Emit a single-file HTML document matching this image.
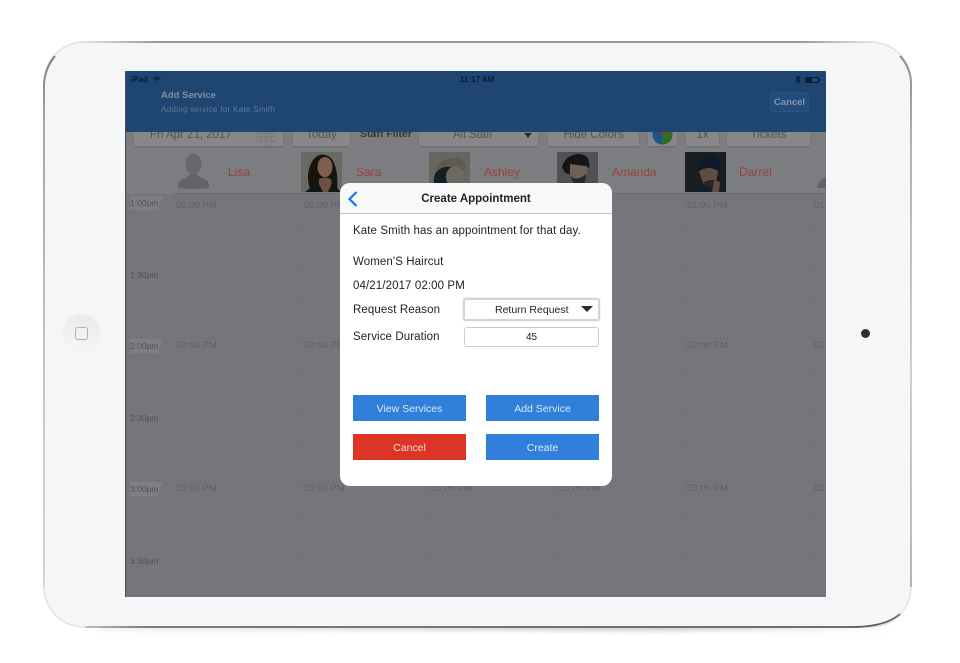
<!DOCTYPE html>
<html><head><meta charset="utf-8">
<style>
html,body{margin:0;padding:0;background:#fff}
#p{position:relative;width:960px;height:663px;overflow:hidden;background:#fff;font-family:"Liberation Sans",sans-serif}
.a{position:absolute}
.t{position:absolute;white-space:nowrap;line-height:1}
.tb{position:absolute;background:#86878a;top:120px;height:26px;box-shadow:0 1px 1px #6a6b6f;color:#535458;font-size:11.5px;text-align:center;line-height:26px}
.tb span{position:absolute;left:0;right:0;top:2px;line-height:26px}
.tl{position:absolute;left:130px;font-size:8.5px;color:#505256;line-height:1;white-space:nowrap}
.tp{position:absolute;font-size:9.5px;color:#5f6165;line-height:1;white-space:nowrap}
.nm{position:absolute;top:166px;font-size:12px;color:#94453a;line-height:1;white-space:nowrap}
.ph{position:absolute;top:152px;width:41px;height:40px;overflow:hidden}
.lb{position:absolute;left:353px;font-size:11.5px;color:#222;line-height:1;white-space:nowrap;letter-spacing:.1px}
.btn{position:absolute;width:113px;height:26px;background:#2f7fdb;color:#dce9f8;font-size:10.5px;text-align:center;line-height:28px}
.lbg{position:absolute;left:130px;width:33px;height:14px;background:#7d7f83;clip-path:polygon(0 0,100% 0,85% 100%,0 100%)}
.hl{position:absolute;left:0;right:0;height:1px;background:#6f7176}
.vl{position:absolute;top:0;bottom:0;width:1px;background:#717378}
</style></head><body><div id="p">

<!-- device -->
<svg class="a" style="left:0;top:0" width="960" height="663" fill="none">
<defs>
<linearGradient id="sh" x1="0" x2="1" y1="0" y2="0"><stop offset="0" stop-color="#bbb" stop-opacity=".2"/><stop offset=".7" stop-color="#aaa" stop-opacity=".6"/><stop offset="1" stop-color="#bbb" stop-opacity="0"/></linearGradient>
<linearGradient id="top" gradientUnits="userSpaceOnUse" x1="78" x2="878" y1="0" y2="0"><stop offset="0" stop-color="#e8e8e8"/><stop offset=".1" stop-color="#8c8c8c"/><stop offset=".9" stop-color="#8c8c8c"/><stop offset="1" stop-color="#e8e8e8"/></linearGradient>
<linearGradient id="lft" gradientUnits="userSpaceOnUse" x1="0" x2="0" y1="56" y2="587"><stop offset="0" stop-color="#7e7e7e"/><stop offset=".12" stop-color="#a5a5a5"/><stop offset=".6" stop-color="#c6c6c6"/><stop offset="1" stop-color="#d4d4d4"/></linearGradient>
<linearGradient id="rgt" gradientUnits="userSpaceOnUse" x1="0" x2="0" y1="56" y2="587"><stop offset="0" stop-color="#8a8a8a"/><stop offset=".15" stop-color="#b0b0b0"/><stop offset=".6" stop-color="#cfcfcf"/><stop offset="1" stop-color="#b5b5b5"/></linearGradient>
<linearGradient id="bot" gradientUnits="userSpaceOnUse" x1="60" x2="900" y1="0" y2="0"><stop offset="0" stop-color="#d8d8d8"/><stop offset=".1" stop-color="#6c6c6c"/><stop offset=".95" stop-color="#5c5c5c"/><stop offset="1" stop-color="#666"/></linearGradient>
</defs>
<rect x="100" y="624" width="800" height="7" fill="url(#sh)" style="filter:blur(2px)"/>
<rect x="44" y="42" width="867" height="585" rx="40" fill="#f4f6f8" stroke="#e2e3e5" stroke-width="1.500"/>
<path d="M78 42H878" stroke="url(#top)" stroke-width="1.800"/>
<path d="M55 56Q45 68 44 84V587" stroke="url(#lft)" stroke-width="2"/>
<path d="M900 56Q911 68 911 84V587" stroke="url(#rgt)" stroke-width="2"/>
<path d="M85 627H852Q885 627 900 614" stroke="url(#bot)" stroke-width="1.800"/>
</svg>
<div class="a" style="left:62px;top:314px;width:39px;height:39px;border-radius:50%;background:linear-gradient(#e9eaec,#f6f7f8)"></div>
<div class="a" style="left:75px;top:327px;width:13px;height:13px;box-sizing:border-box;border:1px solid #aeb0b4;border-radius:3px"></div>
<div class="a" style="left:861px;top:329px;width:9px;height:9px;border-radius:50%;background:#2b2e33"></div>

<!-- screen -->
<div class="a" style="left:126px;top:71px;width:700px;height:526px;background:#74767b"></div>
<div class="a" style="left:125px;top:71px;width:1px;height:526px;background:#4a4c50"></div>
<div class="a" style="left:127px;top:132px;width:698px;height:62px;background:#7c7d81"></div>

<!-- toolbar -->
<div class="tb" style="left:134px;width:149px"><span style="left:16px;right:auto">Fri Apr 21, 2017</span>
<svg class="a" style="left:122px;top:11px" width="20" height="14" stroke="#76777b" fill="none"><path d="M0 2H20M0 6H20M0 10H20M5 0V14M10 0V14M15 0V14"/></svg></div>
<div class="tb" style="left:293px;width:57px"><span>Today</span></div>
<div class="t" style="left:360px;top:129px;font-size:10.500px;font-weight:bold;color:#36373b">Staff Filter</div>
<div class="tb" style="left:419px;width:119px"><span style="left:34px;right:auto">All Staff</span></div>
<div class="a" style="left:524px;top:133px;width:0;height:0;border-left:4px solid transparent;border-right:4px solid transparent;border-top:5px solid #2a2a2a"></div>
<div class="tb" style="left:548px;width:91px"><span>Hide Colors</span></div>
<div class="tb" style="left:648px;width:29px"></div>
<svg class="a" style="left:652px;top:124px" width="21" height="21"><circle cx="10.500" cy="10.500" r="10" fill="#1c5485"/><path d="M10.500 10.500V.5A10 10 0 0 1 20.500 10.500A10 10 0 0 1 10.500 20.500Z" fill="#2f6f25"/><rect x="4" y="8" width="13" height="1" fill="#8a3a32"/></svg>
<div class="tb" style="left:686px;width:33px"><span>1x</span></div>
<div class="tb" style="left:727px;width:83px"><span>Tickets</span></div>

<!-- staff header -->
<svg class="a" style="left:177px;top:153px" width="33" height="36"><ellipse cx="16.500" cy="11" rx="8" ry="10.500" fill="#67686c"/><path d="M1 35Q0 27 9 25L13 21H20L24 25Q33 27 32 35Q16 37 1 35Z" fill="#636468"/></svg>
<div class="nm" style="left:228px">Lisa</div>
<div class="ph" style="left:301px;background:#686b63">
<svg width="41" height="40"><path d="M10 40Q3 22 12 8Q20 -2 30 6Q38 16 36 40Z" fill="#191310"/><ellipse cx="24" cy="15" rx="7.500" ry="10" fill="#7f6050"/><path d="M18 27Q24 24 30 27L32 40H17Z" fill="#6c5142"/><path d="M4 40L17 30 22 40ZM40 40L31 31 27 40Z" fill="#131518"/></svg></div>
<div class="nm" style="left:356px">Sara</div>
<div class="ph" style="left:429px;background:#66665e">
<svg width="41" height="40"><path d="M6 18Q12 5 30 6Q38 10 36 18Z" fill="#5f5950"/><path d="M5 32Q3 18 16 15Q30 14 27 22L22 40H8Z" fill="#161e25"/><ellipse cx="26" cy="25" rx="9" ry="11" fill="#6b6964"/><path d="M21 32L28 31 27 34Z" fill="#6e1c26"/></svg></div>
<div class="nm" style="left:484px">Ashley</div>
<div class="ph" style="left:557px;background:#505154">
<svg width="41" height="40"><path d="M5 15Q8 3 22 2Q34 3 32 16L28 14Q18 13 14 12L13 22Q7 22 5 15Z" fill="#151518"/><path d="M13 12Q24 14 30 14Q31 28 24 32Q16 32 13 22Z" fill="#6f6053"/><path d="M14 24Q20 30 29 22Q29 34 22 35Q15 32 14 24Z" fill="#2d2723"/><path d="M4 40Q12 34 17 33L24 36 34 33 40 40Z" fill="#38383e"/></svg></div>
<div class="nm" style="left:612px">Amanda</div>
<div class="ph" style="left:685px;background:#1b1e21">
<svg width="41" height="40"><path d="M14 20Q11 5 25 4Q37 5 36 20Q27 12 14 20Z" fill="#0f192b"/><path d="M14 19Q24 13 33 19L31 32Q24 36 18 31Z" fill="#5f4d41"/><path d="M19 30Q26 27 31 28L29 35Q24 37 20 34Z" fill="#2d251f"/><path d="M6 40Q10 34 18 33L28 38 36 40Z" fill="#131c2a"/><path d="M29 28L35 30 34 40 27 40Z" fill="#5f4e43"/></svg></div>
<div class="nm" style="left:739px">Darrel</div>
<svg class="a" style="left:815px;top:176px" width="11" height="14"><path d="M2 12Q4 3 11 1V12Z" fill="#626367"/></svg>
<div class="a" style="left:174px;top:193px;width:651px;height:1px;background:#66686c"></div>

<!-- grid -->
<div class="a" style="left:174px;top:195px;width:651px;height:402px;overflow:hidden">
<div class="hl" style="top:36px"></div>
<div class="hl" style="top:72px"></div>
<div class="hl" style="top:107px"></div>
<div class="hl" style="top:143px"></div>
<div class="hl" style="top:179px"></div>
<div class="hl" style="top:215px"></div>
<div class="hl" style="top:250px"></div>
<div class="hl" style="top:286px"></div>
<div class="hl" style="top:322px"></div>
<div class="hl" style="top:358px"></div>
<div class="vl" style="left:0"></div>
<div class="vl" style="left:127px"></div>
<div class="vl" style="left:255px"></div>
<div class="vl" style="left:383px"></div>
<div class="vl" style="left:511px"></div>
<div class="vl" style="left:639px"></div>
</div>
<div class="lbg" style="top:196px"></div>
<div class="lbg" style="top:339px"></div>
<div class="lbg" style="top:482px"></div>
<div class="tl" style="top:199px">1:00pm</div>
<div class="tl" style="top:271px">1:30pm</div>
<div class="tl" style="top:342px">2:00pm</div>
<div class="tl" style="top:414px">2:30pm</div>
<div class="tl" style="top:485px">3:00pm</div>
<div class="tl" style="top:557px">3:30pm</div>
<div class="tp" style="left:176px;top:201px">01:00 PM</div>
<div class="tp" style="left:304px;top:201px">01:00 PM</div>
<div class="tp" style="left:687px;top:201px">01:00 PM</div>
<div class="tp" style="left:814px;top:201px;width:11px;overflow:hidden">01:00</div>
<div class="tp" style="left:176px;top:341px">02:00 PM</div>
<div class="tp" style="left:304px;top:341px">02:00 PM</div>
<div class="tp" style="left:687px;top:341px">02:00 PM</div>
<div class="tp" style="left:814px;top:341px;width:11px;overflow:hidden">02:00</div>
<div class="tp" style="left:176px;top:484px">03:00 PM</div>
<div class="tp" style="left:304px;top:484px">03:00 PM</div>
<div class="tp" style="left:431px;top:484px">03:00 PM</div>
<div class="tp" style="left:559px;top:484px">03:00 PM</div>
<div class="tp" style="left:687px;top:484px">03:00 PM</div>
<div class="tp" style="left:814px;top:484px;width:11px;overflow:hidden">03:00</div>

<!-- nav bar -->
<div class="a" style="left:126px;top:71px;width:700px;height:61px;background:#1f4672;border-radius:2px 2px 0 0"></div>
<div class="t" style="left:131px;top:76px;font-size:8px;color:#0e1b2b;font-weight:bold">iPad</div>
<svg class="a" style="left:152px;top:76px" width="9" height="7" fill="none" stroke="#0e1b2b"><path d="M.7 2.500Q4.500-.5 8.300 2.500M2 4Q4.500 2 7 4"/><circle cx="4.500" cy="5.700" r=".9" fill="#0e1b2b" stroke="none"/></svg>
<div class="t" style="left:460px;top:76px;font-size:8px;color:#0e1b2b;font-weight:bold">11:17 AM</div>
<svg class="a" style="left:795px;top:75px" width="6" height="9" fill="none" stroke="#0e1b2b" stroke-width=".9"><path d="M.5 2.500L5 6 3 8V1L5 3 .5 6.500"/></svg>
<div class="a" style="left:805px;top:77px;width:14px;height:6px;box-sizing:border-box;border:1px solid #0e1b2b;border-radius:1px"><div style="width:6px;height:4px;background:#0e1b2b"></div></div>
<div class="a" style="left:819px;top:79px;width:1px;height:2px;background:#0e1b2b"></div>
<div class="t" style="left:161px;top:91px;font-size:9.500px;font-weight:bold;color:#7f8fa3">Add Service</div>
<div class="t" style="left:161px;top:106px;font-size:8px;color:#5f7a9a;letter-spacing:.3px">Adding service for Kate Smith</div>
<div class="a" style="left:770px;top:92px;width:39px;height:20px;box-sizing:border-box;border:1px solid #2a5382;border-radius:3px;background:#234c7b;color:#8194aa;font-size:9.500px;font-weight:bold;text-align:center;line-height:19px">Cancel</div>

<!-- modal -->
<div class="a" style="left:340px;top:183px;width:272px;height:303px;background:#fff;border-radius:10px;overflow:hidden">
<div class="a" style="left:0;top:0;width:272px;height:30px;background:#f8f8f8;border-bottom:1px solid #c4c4c6"></div>
</div>
<svg class="a" style="left:347px;top:191px" width="12" height="16" fill="none" stroke="#0a7bf0" stroke-width="2.200"><path d="M9.500 1L2.500 8 9.500 15"/></svg>
<div class="t" style="left:340px;width:272px;text-align:center;top:194px;font-size:11.500px;font-weight:bold;color:#222">Create Appointment</div>
<div class="lb" style="top:226px">Kate Smith has an appointment for that day.</div>
<div class="lb" style="top:257px">Women'S Haircut</div>
<div class="lb" style="top:281px">04/21/2017 02:00 PM</div>
<div class="lb" style="top:305px">Request Reason</div>
<div class="lb" style="top:332px">Service Duration</div>
<div class="a" style="left:464px;top:299px;width:135px;height:21px;box-sizing:border-box;background:#fff;border:1px solid #d5d5d5;box-shadow:0 0 2px #777;color:#222;font-size:10.500px;line-height:20px"><span style="position:absolute;left:30px">Return Request</span></div>
<div class="a" style="left:581px;top:306px;width:0;height:0;border-left:6.500px solid transparent;border-right:6.500px solid transparent;border-top:6px solid #2a2a2a"></div>
<div class="a" style="left:464px;top:327px;width:135px;height:20px;box-sizing:border-box;background:#fff;border:1px solid #ccc;border-radius:3px;color:#222;font-size:10px;line-height:19px;text-align:center">45</div>
<div class="btn" style="left:353px;top:395px">View Services</div>
<div class="btn" style="left:486px;top:395px">Add Service</div>
<div class="btn" style="left:353px;top:434px;background:#dc3526;color:#f7dcd8">Cancel</div>
<div class="btn" style="left:486px;top:434px">Create</div>
</div></body></html>
